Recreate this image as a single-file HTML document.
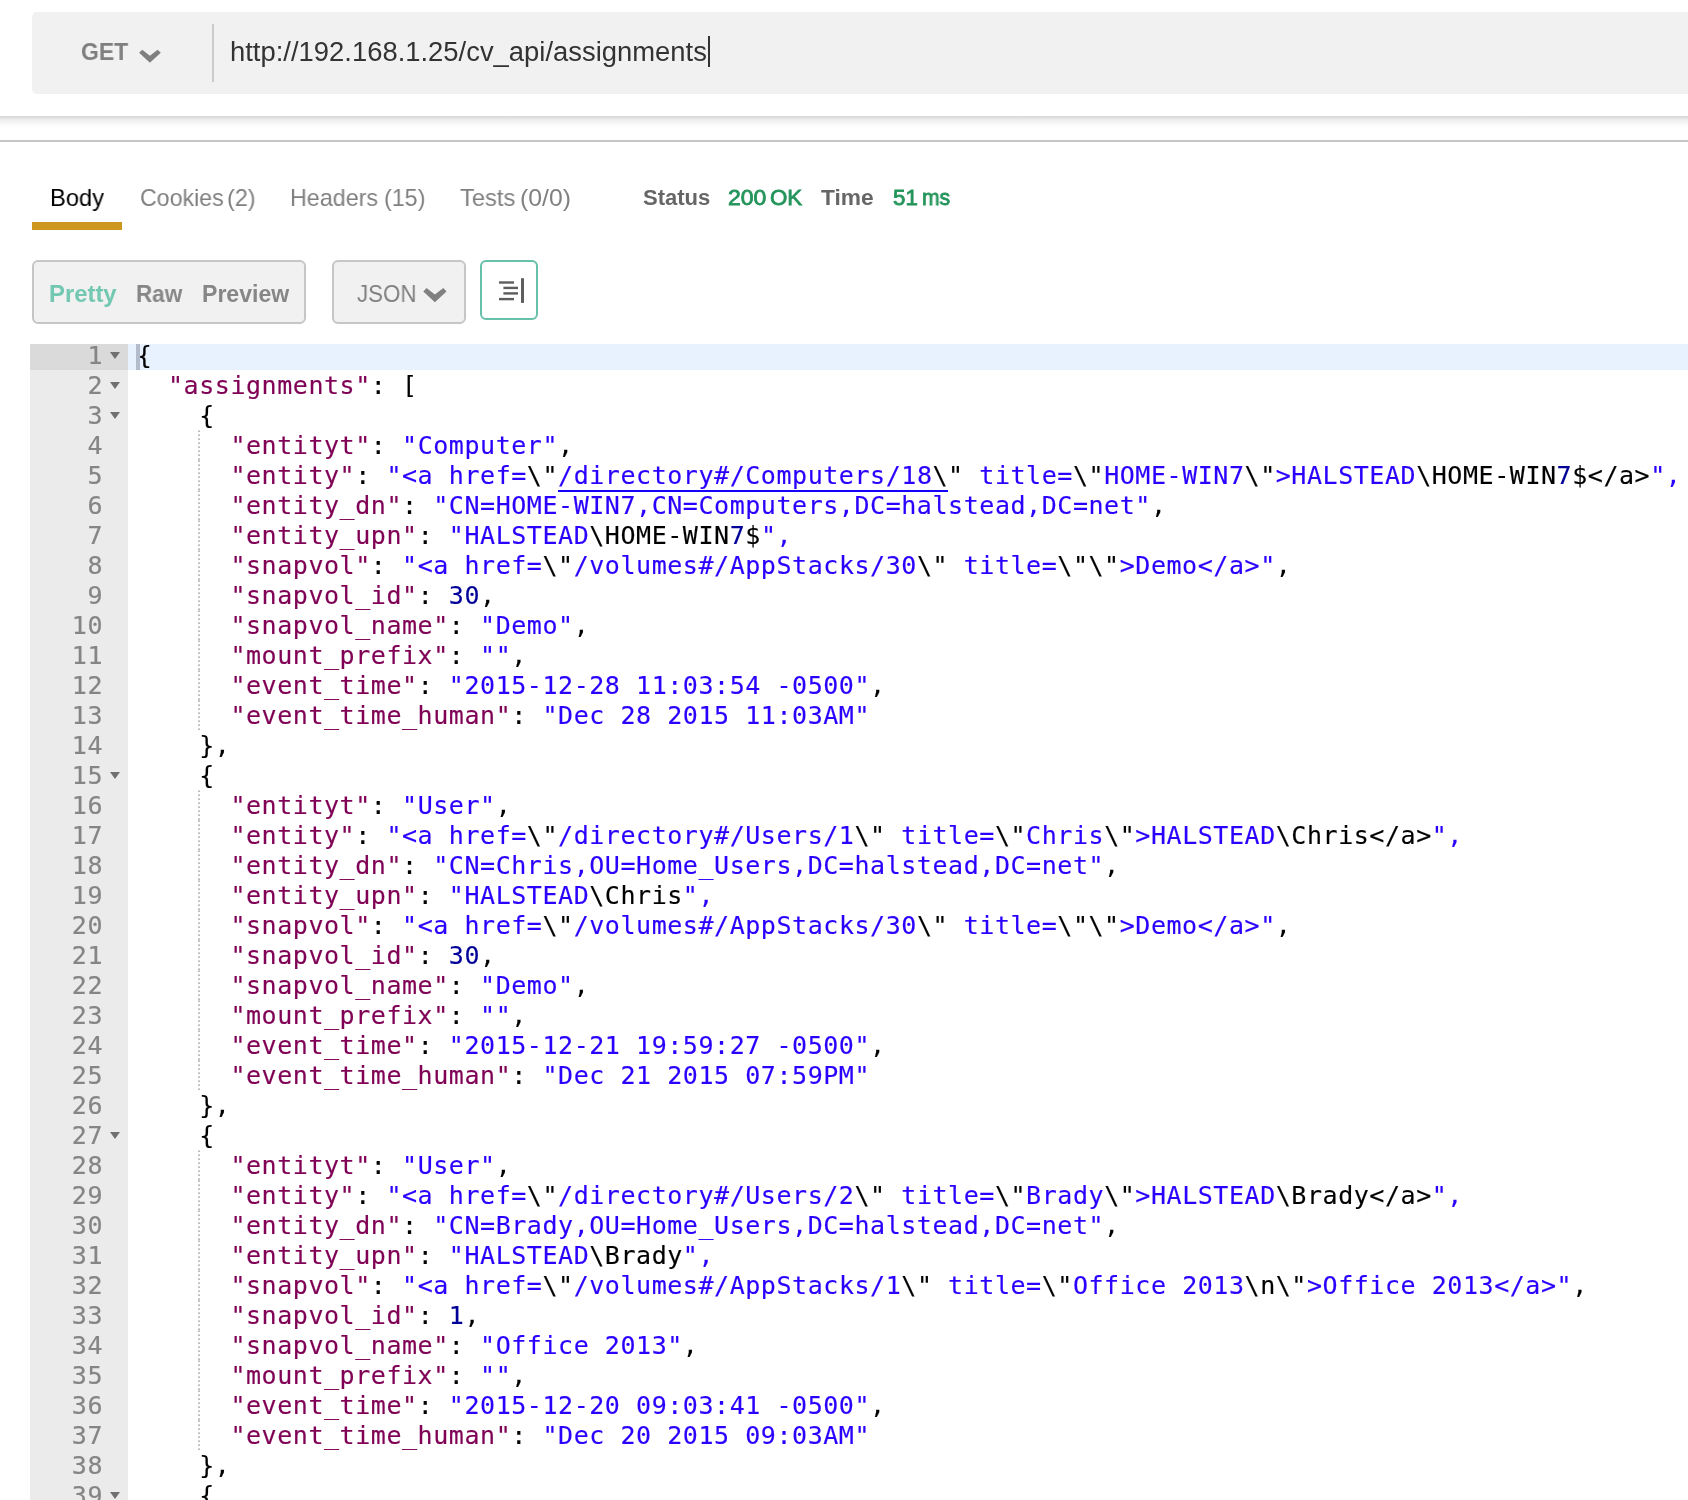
<!DOCTYPE html>
<html lang="en">
<head>
<meta charset="utf-8">
<title>Postman - cv_api/assignments</title>
<style>
html,body{margin:0;padding:0;background:#fff;}
body{width:1688px;height:1500px;overflow:hidden;position:relative;font-family:"Liberation Sans",sans-serif;}
.abs{position:absolute;}
.t{position:absolute;white-space:nowrap;line-height:1;transform-origin:0 0;will-change:transform;}
/* url bar */
#urlbar{left:32px;top:12px;width:1660px;height:82px;background:#f1f1f1;border-radius:5px 0 0 5px;}
#sep{left:212px;top:24px;width:2px;height:58px;background:#cacaca;}
#caret{left:708px;top:36px;width:2px;height:31px;background:#333;}
#shadow{left:0;top:116px;width:1688px;height:12px;background:linear-gradient(#d6d6d6,#ececec 30%,#fafafa 70%,#fff);}
#hr{left:0;top:140px;width:1688px;height:2px;background:#c6c6c6;}
#tabline{left:32px;top:222px;width:90px;height:8px;background:#cc981d;}
.btn{box-sizing:border-box;border:2px solid #c6c6c6;border-radius:6px;background:#f1f1f1;}
#grp{left:32px;top:260px;width:274px;height:64px;}
#json{left:332px;top:260px;width:134px;height:64px;}
#wrap{left:480px;top:260px;width:58px;height:60px;background:#fff;border-color:#66c0aa;}
/* editor */
#gutter{left:30px;top:344px;width:98px;height:1156px;background:#ebebeb;overflow:hidden;}
#code{left:128px;top:344px;width:1560px;height:1156px;overflow:hidden;}
#gutter>.in,#code>.in{position:absolute;left:0;top:-4px;width:100%;will-change:transform;}
.g,.l{height:30px;line-height:32px;font-family:"DejaVu Sans Mono","Liberation Mono",monospace;font-size:25px;letter-spacing:.55px;white-space:pre;position:relative;}
.g{color:#858585;text-align:right;padding-right:25px;-webkit-text-stroke:.2px #858585;}
.ga{background:#dadada;}
.f{position:absolute;right:8.1px;top:11.8px;width:0;height:0;border-left:5.8px solid transparent;border-right:5.8px solid transparent;border-top:7px solid #707070;}
.l{padding-left:8.8px;color:#000;-webkit-text-stroke-width:.15px;}
.la{background:#e8f2fe;}
.cur{position:absolute;left:8px;top:0;width:4px;height:30px;background:#b3bccb;}
.k{color:#7f0055;}
.s{color:#2a00ff;}
.n{color:#000099;}
.u{border-bottom:2px solid #1400ff;}
.ig{position:absolute;left:70px;top:0;width:2px;height:30px;background:repeating-linear-gradient(to bottom,#d4d4d4 0,#d4d4d4 1px,#bdbdbd 1px,#bdbdbd 2px,transparent 2px,transparent 4px);}
</style>
</head>
<body>
<div id="urlbar" class="abs"></div>
<svg class="abs" style="left:138px;top:48px" width="24" height="16" viewBox="0 0 24 16"><path d="M1.1 4.7 L4.3 1.8 L11.9 7.8 L19.6 1.8 L22.8 4.7 L11.9 14.8 Z" fill="#808080"/></svg>
<div id="sep" class="abs"></div>
<div id="caret" class="abs"></div>
<div id="shadow" class="abs"></div>
<div id="hr" class="abs"></div>

<div id="tabline" class="abs"></div>

<div id="grp" class="abs btn"></div>
<div id="json" class="abs btn"></div>
<svg class="abs" style="left:423px;top:287px" width="25" height="16" viewBox="0 0 25 16"><path d="M0.3 4.5 L3.5 0.9 L11.9 7.6 L20.3 0.9 L23.5 4.5 L11.9 15.2 Z" fill="#808080"/></svg>
<div id="wrap" class="abs btn"></div>
<svg class="abs" style="left:498px;top:277px" width="28" height="28" viewBox="0 0 28 28"><g fill="#5e5e5e"><rect x="1" y="4.3" width="15" height="2.4"/><rect x="5.4" y="9.7" width="14.6" height="2.4"/><rect x="5.4" y="15.2" width="14.6" height="2.4"/><rect x="1" y="20.9" width="15" height="2.4"/><rect x="23" y="1.2" width="3" height="24.7"/></g></svg>

<div id="get" class="t" style="left:80.67px;top:40.00px;font-size:24px;font-weight:bold;color:#7f7f7f;transform:scaleX(0.9549);">GET</div>
<div id="url" class="t" style="left:229.77px;top:38.85px;font-size:27px;color:#333;transform:scaleX(1.0151);">http://192.168.1.25/cv_api/assignments</div>
<div id="tab1" class="t" style="left:49.55px;top:185.60px;font-size:24px;color:#000;transform:scaleX(0.9881);">Body</div>
<div id="tab2a" class="t" style="left:139.87px;top:185.60px;font-size:24px;color:#808080;transform:scaleX(0.9654);">Cookies</div>
<div id="tab2b" class="t" style="left:227.24px;top:185.60px;font-size:24px;color:#808080;transform:scaleX(0.9771);">(2)</div>
<div id="tab3a" class="t" style="left:290.27px;top:185.60px;font-size:24px;color:#808080;transform:scaleX(0.9702);">Headers</div>
<div id="tab3b" class="t" style="left:383.62px;top:185.60px;font-size:24px;color:#808080;transform:scaleX(0.9699);">(15)</div>
<div id="tab4a" class="t" style="left:460.15px;top:185.60px;font-size:24px;color:#808080;transform:scaleX(0.9884);">Tests</div>
<div id="tab4b" class="t" style="left:520.43px;top:185.60px;font-size:24px;color:#808080;transform:scaleX(1.0316);">(0/0)</div>
<div id="st1" class="t" style="left:643.14px;top:186.70px;font-size:22px;font-weight:bold;color:#666;transform:scaleX(1.0007);">Status</div>
<div id="st2a" class="t" style="left:728.20px;top:186.66px;font-size:22px;color:#23945a;-webkit-text-stroke:.8px #23945a;transform:scaleX(1.0460);">200</div>
<div id="st2b" class="t" style="left:769.94px;top:186.70px;font-size:22px;color:#23945a;-webkit-text-stroke:.8px #23945a;transform:scaleX(1.0126);">OK</div>
<div id="st3" class="t" style="left:821.10px;top:186.70px;font-size:22px;font-weight:bold;color:#666;transform:scaleX(1.0342);">Time</div>
<div id="st4a" class="t" style="left:893.47px;top:186.82px;font-size:22px;color:#23945a;-webkit-text-stroke:.8px #23945a;transform:scaleX(1.0115);">51</div>
<div id="st4b" class="t" style="left:921.73px;top:186.82px;font-size:22px;color:#23945a;-webkit-text-stroke:.8px #23945a;transform:scaleX(0.9604);">ms</div>
<div id="b1" class="t" style="left:48.66px;top:282.65px;font-size:23px;font-weight:bold;color:#72c8b1;transform:scaleX(1.0376);">Pretty</div>
<div id="b2" class="t" style="left:135.73px;top:282.65px;font-size:23px;font-weight:bold;color:#868686;transform:scaleX(0.9760);">Raw</div>
<div id="b3" class="t" style="left:201.66px;top:282.65px;font-size:23px;font-weight:bold;color:#868686;transform:scaleX(1.0025);">Preview</div>
<div id="b4" class="t" style="left:356.69px;top:281.86px;font-size:24px;color:#808080;transform:scaleX(0.9286);">JSON</div>

<div id="gutter" class="abs"><div class="in">
<div class="g ga">1<i class="f"></i></div>
<div class="g">2<i class="f"></i></div>
<div class="g">3<i class="f"></i></div>
<div class="g">4</div>
<div class="g">5</div>
<div class="g">6</div>
<div class="g">7</div>
<div class="g">8</div>
<div class="g">9</div>
<div class="g">10</div>
<div class="g">11</div>
<div class="g">12</div>
<div class="g">13</div>
<div class="g">14</div>
<div class="g">15<i class="f"></i></div>
<div class="g">16</div>
<div class="g">17</div>
<div class="g">18</div>
<div class="g">19</div>
<div class="g">20</div>
<div class="g">21</div>
<div class="g">22</div>
<div class="g">23</div>
<div class="g">24</div>
<div class="g">25</div>
<div class="g">26</div>
<div class="g">27<i class="f"></i></div>
<div class="g">28</div>
<div class="g">29</div>
<div class="g">30</div>
<div class="g">31</div>
<div class="g">32</div>
<div class="g">33</div>
<div class="g">34</div>
<div class="g">35</div>
<div class="g">36</div>
<div class="g">37</div>
<div class="g">38</div>
<div class="g">39<i class="f"></i></div>
</div></div>
<div id="code" class="abs"><div class="in">
<div class="l la"><i class="cur"></i>{</div>
<div class="l">  <span class="k">"assignments"</span>: [</div>
<div class="l">    {</div>
<div class="l"><i class="ig"></i>      <span class="k">"entityt"</span>: <span class="s">"Computer"</span>,</div>
<div class="l"><i class="ig"></i>      <span class="k">"entity"</span>: <span class="s">"&lt;a href=</span>\"<span class="u"><span class="s">/directory#/Computers/18</span>\</span>"<span class="s"> title=</span>\"<span class="s">HOME-WIN7</span>\"<span class="s">&gt;HALSTEAD</span>\HOME-WIN<span class="n">7</span>$&lt;/a&gt;<span class="s">",</span></div>
<div class="l"><i class="ig"></i>      <span class="k">"entity_dn"</span>: <span class="s">"CN=HOME-WIN7,CN=Computers,DC=halstead,DC=net"</span>,</div>
<div class="l"><i class="ig"></i>      <span class="k">"entity_upn"</span>: <span class="s">"HALSTEAD</span>\HOME-WIN<span class="n">7</span>$<span class="s">",</span></div>
<div class="l"><i class="ig"></i>      <span class="k">"snapvol"</span>: <span class="s">"&lt;a href=</span>\"<span class="s">/volumes#/AppStacks/30</span>\"<span class="s"> title=</span>\"\"<span class="s">&gt;Demo&lt;/a&gt;"</span>,</div>
<div class="l"><i class="ig"></i>      <span class="k">"snapvol_id"</span>: <span class="n">30</span>,</div>
<div class="l"><i class="ig"></i>      <span class="k">"snapvol_name"</span>: <span class="s">"Demo"</span>,</div>
<div class="l"><i class="ig"></i>      <span class="k">"mount_prefix"</span>: <span class="s">""</span>,</div>
<div class="l"><i class="ig"></i>      <span class="k">"event_time"</span>: <span class="s">"2015-12-28 11:03:54 -0500"</span>,</div>
<div class="l"><i class="ig"></i>      <span class="k">"event_time_human"</span>: <span class="s">"Dec 28 2015 11:03AM"</span></div>
<div class="l">    },</div>
<div class="l">    {</div>
<div class="l"><i class="ig"></i>      <span class="k">"entityt"</span>: <span class="s">"User"</span>,</div>
<div class="l"><i class="ig"></i>      <span class="k">"entity"</span>: <span class="s">"&lt;a href=</span>\"<span class="s">/directory#/Users/1</span>\"<span class="s"> title=</span>\"<span class="s">Chris</span>\"<span class="s">&gt;HALSTEAD</span>\Chris&lt;/a&gt;<span class="s">",</span></div>
<div class="l"><i class="ig"></i>      <span class="k">"entity_dn"</span>: <span class="s">"CN=Chris,OU=Home_Users,DC=halstead,DC=net"</span>,</div>
<div class="l"><i class="ig"></i>      <span class="k">"entity_upn"</span>: <span class="s">"HALSTEAD</span>\Chris<span class="s">",</span></div>
<div class="l"><i class="ig"></i>      <span class="k">"snapvol"</span>: <span class="s">"&lt;a href=</span>\"<span class="s">/volumes#/AppStacks/30</span>\"<span class="s"> title=</span>\"\"<span class="s">&gt;Demo&lt;/a&gt;"</span>,</div>
<div class="l"><i class="ig"></i>      <span class="k">"snapvol_id"</span>: <span class="n">30</span>,</div>
<div class="l"><i class="ig"></i>      <span class="k">"snapvol_name"</span>: <span class="s">"Demo"</span>,</div>
<div class="l"><i class="ig"></i>      <span class="k">"mount_prefix"</span>: <span class="s">""</span>,</div>
<div class="l"><i class="ig"></i>      <span class="k">"event_time"</span>: <span class="s">"2015-12-21 19:59:27 -0500"</span>,</div>
<div class="l"><i class="ig"></i>      <span class="k">"event_time_human"</span>: <span class="s">"Dec 21 2015 07:59PM"</span></div>
<div class="l">    },</div>
<div class="l">    {</div>
<div class="l"><i class="ig"></i>      <span class="k">"entityt"</span>: <span class="s">"User"</span>,</div>
<div class="l"><i class="ig"></i>      <span class="k">"entity"</span>: <span class="s">"&lt;a href=</span>\"<span class="s">/directory#/Users/2</span>\"<span class="s"> title=</span>\"<span class="s">Brady</span>\"<span class="s">&gt;HALSTEAD</span>\Brady&lt;/a&gt;<span class="s">",</span></div>
<div class="l"><i class="ig"></i>      <span class="k">"entity_dn"</span>: <span class="s">"CN=Brady,OU=Home_Users,DC=halstead,DC=net"</span>,</div>
<div class="l"><i class="ig"></i>      <span class="k">"entity_upn"</span>: <span class="s">"HALSTEAD</span>\Brady<span class="s">",</span></div>
<div class="l"><i class="ig"></i>      <span class="k">"snapvol"</span>: <span class="s">"&lt;a href=</span>\"<span class="s">/volumes#/AppStacks/1</span>\"<span class="s"> title=</span>\"<span class="s">Office 2013</span>\n\"<span class="s">&gt;Office 2013&lt;/a&gt;"</span>,</div>
<div class="l"><i class="ig"></i>      <span class="k">"snapvol_id"</span>: <span class="n">1</span>,</div>
<div class="l"><i class="ig"></i>      <span class="k">"snapvol_name"</span>: <span class="s">"Office 2013"</span>,</div>
<div class="l"><i class="ig"></i>      <span class="k">"mount_prefix"</span>: <span class="s">""</span>,</div>
<div class="l"><i class="ig"></i>      <span class="k">"event_time"</span>: <span class="s">"2015-12-20 09:03:41 -0500"</span>,</div>
<div class="l"><i class="ig"></i>      <span class="k">"event_time_human"</span>: <span class="s">"Dec 20 2015 09:03AM"</span></div>
<div class="l">    },</div>
<div class="l">    {</div>
</div></div>
</body>
</html>
